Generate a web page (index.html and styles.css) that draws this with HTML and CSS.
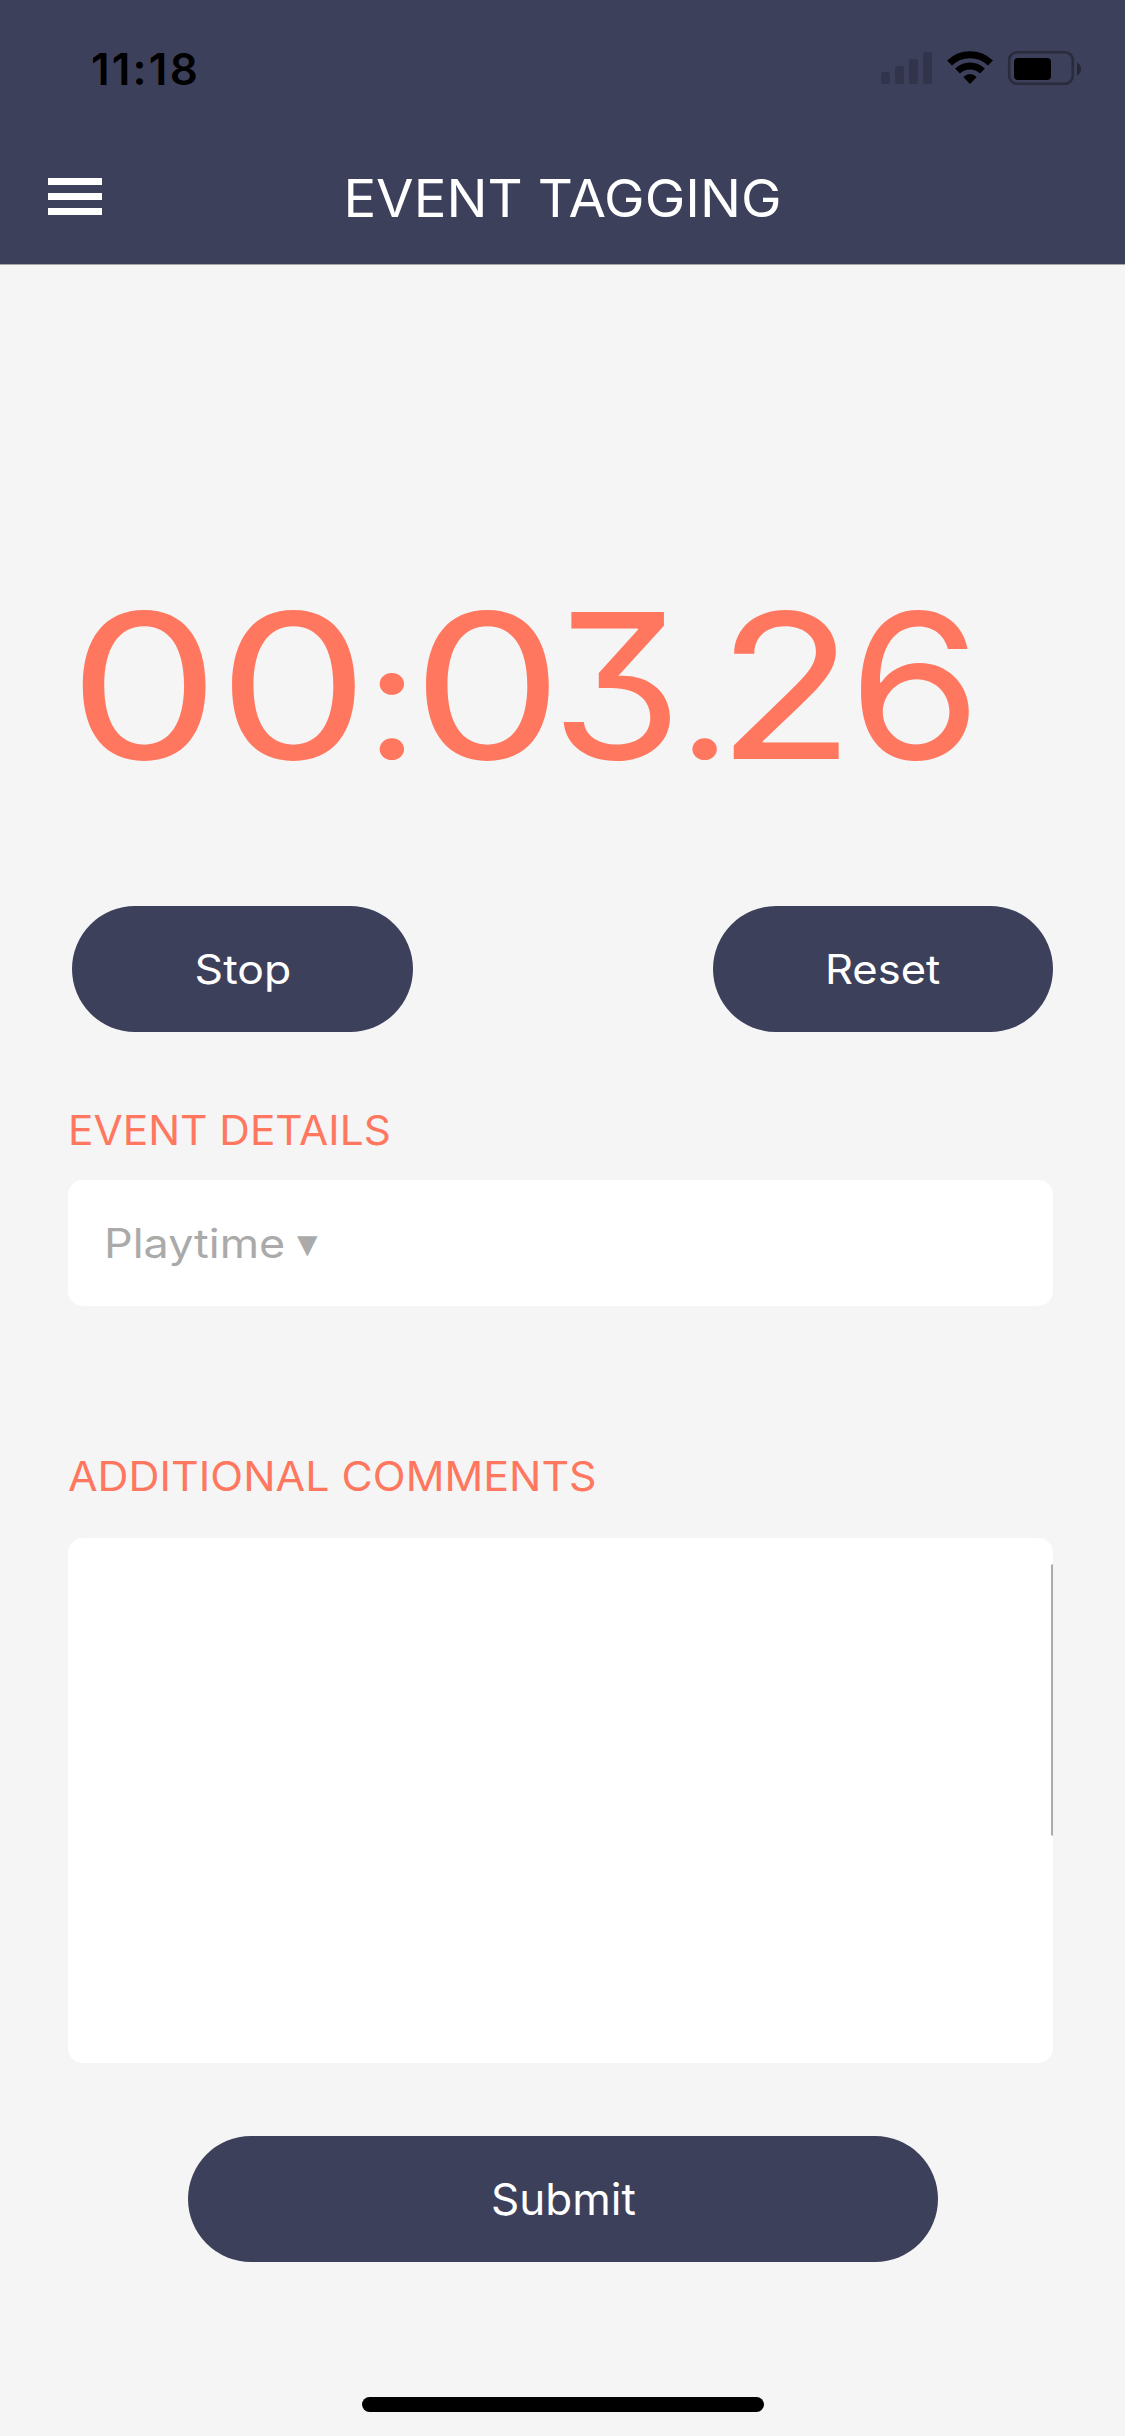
FILE: index.html
```html
<!DOCTYPE html>
<html lang="en">
<head>
<meta charset="utf-8">
<title>Event Tagging</title>
<link rel="stylesheet" href="styles.css">
</head>
<body>
<div class="screen">
  <header class="header">
    <div class="status">
      <span class="status-time">11:18</span>
      <svg class="status-icons" width="206" height="36" viewBox="0 0 206 36">
        <g fill="#32344b">
          <rect x="3" y="22" width="9" height="12" rx="2.5"/>
          <rect x="17" y="16" width="9" height="18" rx="2.5"/>
          <rect x="31" y="9" width="9" height="25" rx="2.5"/>
          <rect x="45" y="2" width="9" height="32" rx="2.5"/>
        </g>
        <g fill="none" stroke="#000" stroke-width="7">
          <path d="M71.5 13 A29.5 29.5 0 0 1 112.500 13"/>
          <path d="M79.500 21 A18 18 0 0 1 104.500 21"/>
        </g>
        <path d="M85.300 27 Q92 21 98.700 27 L92 34 Z"/>
        <rect x="131.200" y="2.200" width="63.600" height="31.600" rx="8" fill="none" stroke="#2a2b3d" stroke-width="2.600"/>
        <rect x="136" y="8" width="37" height="22" rx="4"/>
        <path d="M199 12.500 Q203 14.500 203 19 Q203 23.500 199 25.500 Z" fill="#252636"/>
      </svg>
    </div>
    <div class="navbar">
      <div class="menu"><i></i><i></i><i></i></div>
      <h1 class="title">EVENT TAGGING</h1>
    </div>
  </header>
  <main class="content">
    <div class="timer"><span class="zero m1">0</span><span class="zero">0</span><span class="dot colon">:</span><span class="zero s1">0</span><span class="s2">3</span><span class="dot point">.</span><span class="c1">2</span><span class="c2">6</span></div>
    <div class="actions">
      <button class="btn half"><span class="stop">Stop</span></button>
      <button class="btn half last"><span class="reset">Reset</span></button>
    </div>
    <h2 class="label details">EVENT DETAILS</h2>
    <div class="select"><span class="value">Playtime</span><span class="caret">▾</span></div>
    <h2 class="label comments">ADDITIONAL COMMENTS</h2>
    <div class="textarea"><div class="scrollbar"></div></div>
    <button class="btn submit">Submit</button>
  </main>
  <div class="home"></div>
</div>
</body>
</html>
```
FILE: styles.css
```css
* { box-sizing: border-box; }
body { margin: 0; background: #f5f5f5; }
.screen {
  width: 1125px;
  height: 2436px;
  display: flex;
  flex-direction: column;
  font-family: Inter, "Liberation Sans", sans-serif;
  font-size: 40.5px;
  overflow: hidden;
}
.header { height: 265px; flex: none; background: #3d405b; border-bottom: 1px solid #a7a7ab; }
.status {
  height: 132px;
  padding: 0 41px 0 91px;
  display: flex;
  align-items: flex-start;
  justify-content: space-between;
}
.status-time {
  margin-top: 39px;
  line-height: 60px;
  font-size: 44px;
  font-weight: 600;
  letter-spacing: 2.2px;
  color: #000;
}
.status-icons { margin-top: 50px; }
.navbar { height: 132px; display: grid; grid-template-columns: 150px 1fr 150px; align-items: center; }
.menu { margin: -3px 0 0 48px; width: 54px; display: flex; flex-direction: column; gap: 8.3px; }
.menu i { height: 6.7px; background: #fff; }
.title {
  margin: 0;
  text-align: center;
  font-size: 52.5px;
  font-weight: 400;
  line-height: 132px;
  color: #fff;
  white-space: nowrap;
  transform: scaleX(1.037);
}
.content { padding: 316px 72px 0 68px; display: flex; flex-direction: column; }
.timer {
  margin: 0 0 116px 4.5px;
  line-height: 209px;
  height: 209px;
  font-size: 202px;
  color: #ff775f;
  white-space: nowrap;
  font-feature-settings: "cv09", "calt" 0;
  transform: scaleX(1.12);
  transform-origin: left;
}
.timer span { display: inline-block; }
.timer .zero { transform: scaleX(1.06); }
.m1 { letter-spacing: 6px; }
.timer .dot { font-size: 165px; line-height: 1; }
.colon { letter-spacing: -2.5px; }
.s1 { letter-spacing: -10px; }
.s2 { letter-spacing: -8.5px; transform: scaleX(0.94); }
.point { letter-spacing: -13px; }
.c1 { letter-spacing: -9px; }
.c2 { transform: scaleX(0.95); }
.actions { display: flex; justify-content: space-between; padding-left: 4px; }
.btn {
  height: 126px;
  padding: 0;
  border: 0;
  border-radius: 63px;
  background: #3d405b;
  color: #fff;
  font-family: inherit;
  font-size: 40.5px;
  line-height: 126px;
}
.half { width: 341px; padding-top: 1px; }
.last { width: 340px; }
.btn span { display: inline-block; }
.stop { transform: scaleX(1.1); }
.reset { transform: scaleX(1.075); }
.label { margin: 0; font-size: 40.5px; font-weight: 400; line-height: 60px; color: #ff775f; transform-origin: left; white-space: nowrap; }
.details { margin: 69px 0 19px; transform: scaleX(1.046); }
.select {
  height: 126px;
  padding-left: 36px;
  border-radius: 15px;
  background: #fff;
  color: #aaa;
  display: flex;
  align-items: center;
}
.value { width: 193px; transform: scaleX(1.11); transform-origin: left; }
.caret { font-family: "DejaVu Sans", sans-serif; font-size: 41px; line-height: 60px; }
.comments { margin: 141px 0 31px; transform: scaleX(1.06); }
.textarea { position: relative; height: 525px; border-radius: 15px; background: #fff; }
.scrollbar { position: absolute; right: 0; top: 26px; width: 2px; height: 272px; border-radius: 2px 0 0 2px; background: #ababab; }
.submit { width: 750px; margin: 73px 0 0 120px; font-size: 44px; padding-left: 1px; }
.home { width: 402px; height: 15px; margin: 135px auto 0; border-radius: 8px; background: #000; }
```
